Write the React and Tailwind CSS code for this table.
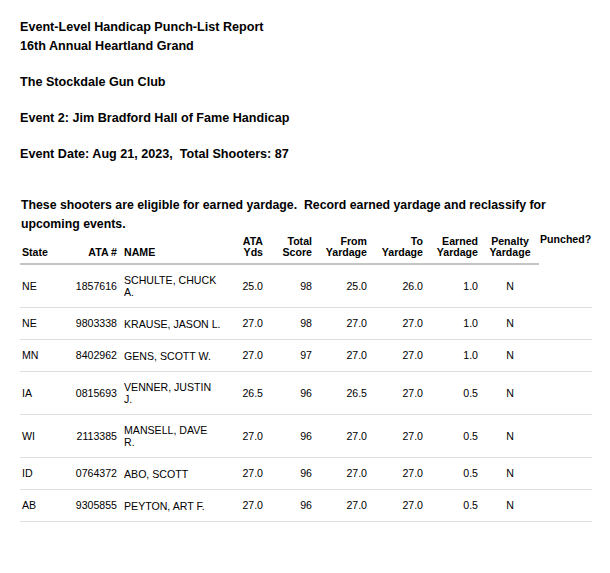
import React from 'react';

const shooters = [
    { state: 'NE', ata: '1857616', name: ['SCHULTE, CHUCK', 'A.'], yds: '25.0', score: '98', from: '25.0', to: '26.0', earned: '1.0', penalty: 'N' },
    { state: 'NE', ata: '9803338', name: ['KRAUSE, JASON L.'], yds: '27.0', score: '98', from: '27.0', to: '27.0', earned: '1.0', penalty: 'N' },
    { state: 'MN', ata: '8402962', name: ['GENS, SCOTT W.'], yds: '27.0', score: '97', from: '27.0', to: '27.0', earned: '1.0', penalty: 'N' },
    { state: 'IA', ata: '0815693', name: ['VENNER, JUSTIN', 'J.'], yds: '26.5', score: '96', from: '26.5', to: '27.0', earned: '0.5', penalty: 'N' },
    { state: 'WI', ata: '2113385', name: ['MANSELL, DAVE', 'R.'], yds: '27.0', score: '96', from: '27.0', to: '27.0', earned: '0.5', penalty: 'N' },
    { state: 'ID', ata: '0764372', name: ['ABO, SCOTT'], yds: '27.0', score: '96', from: '27.0', to: '27.0', earned: '0.5', penalty: 'N' },
    { state: 'AB', ata: '9305855', name: ['PEYTON, ART F.'], yds: '27.0', score: '96', from: '27.0', to: '27.0', earned: '0.5', penalty: 'N' },
];

const th = 'align-bottom pt-[2px] pb-[5px] px-[3px] font-bold border-b-2 border-[#c4c4c4]';
const td = 'align-middle py-[10px] px-[3px] border-b border-[#dedede]';

const App = () => {
    return (
        <div className="min-h-screen bg-white pl-[20px] pt-[18px] text-black font-['Liberation_Sans',Arial,sans-serif]">
            <div className="text-[12.6px] font-bold leading-[19px]">
                <p>Event-Level Handicap Punch-List Report</p>
                <p>16th Annual Heartland Grand</p>
                <p className="mt-[17px]">The Stockdale Gun Club</p>
                <p className="mt-[17px]">Event 2: Jim Bradford Hall of Fame Handicap</p>
                <p className="mt-[17px]">Event Date: Aug 21, 2023,{'\u00a0'} Total Shooters: 87</p>
                <p className="mt-[32px] w-[572px] pl-[1px] text-[12.3px]">
                    These shooters are eligible for earned yardage.{'\u00a0'} Record earned yardage and reclassify for upcoming events.
                </p>
            </div>

            <table className="w-[572px] table-fixed border-separate border-spacing-0 text-[10.6px] leading-[11px]">
                <colgroup>
                    <col className="w-[50px]" />
                    <col className="w-[50px]" />
                    <col className="w-[108px]" />
                    <col className="w-[38px]" />
                    <col className="w-[49px]" />
                    <col className="w-[55px]" />
                    <col className="w-[56px]" />
                    <col className="w-[55px]" />
                    <col className="w-[58px]" />
                    <col className="w-[53px]" />
                </colgroup>
                <thead>
                    <tr>
                        <th className={`${th} text-left pl-[2px]`}>State</th>
                        <th className={`${th} text-right`}>ATA #</th>
                        <th className={`${th} text-left pl-[4px]`}>NAME</th>
                        <th className={`${th} text-right`}>ATA<br />Yds</th>
                        <th className={`${th} text-right`}>Total<br />Score</th>
                        <th className={`${th} text-right`}>From<br />Yardage</th>
                        <th className={`${th} text-right`}>To<br />Yardage</th>
                        <th className={`${th} text-right`}>Earned<br />Yardage</th>
                        <th className={`${th} text-center`}>Penalty<br />Yardage</th>
                        <th className="align-top pt-0 pl-[1px] text-left font-bold whitespace-nowrap">Punched?</th>
                    </tr>
                </thead>
                <tbody>
                    {shooters.map((s) => (
                        <tr key={s.ata}>
                            <td className={`${td} pl-[2px] text-left`}>{s.state}</td>
                            <td className={`${td} text-right`}>{s.ata}</td>
                            <td className="align-middle py-[9px] pl-[4px] pr-[3px] leading-[12px] whitespace-nowrap border-b border-[#dedede]">
                                {s.name.map((line, i) => (
                                    <div key={i}>{line}</div>
                                ))}
                            </td>
                            <td className={`${td} text-right`}>{s.yds}</td>
                            <td className={`${td} text-right`}>{s.score}</td>
                            <td className={`${td} text-right`}>{s.from}</td>
                            <td className={`${td} text-right`}>{s.to}</td>
                            <td className={`${td} text-right`}>{s.earned}</td>
                            <td className={`${td} text-center`}>{s.penalty}</td>
                            <td className={td}></td>
                        </tr>
                    ))}
                </tbody>
            </table>
        </div>
    );
};

export default App;
